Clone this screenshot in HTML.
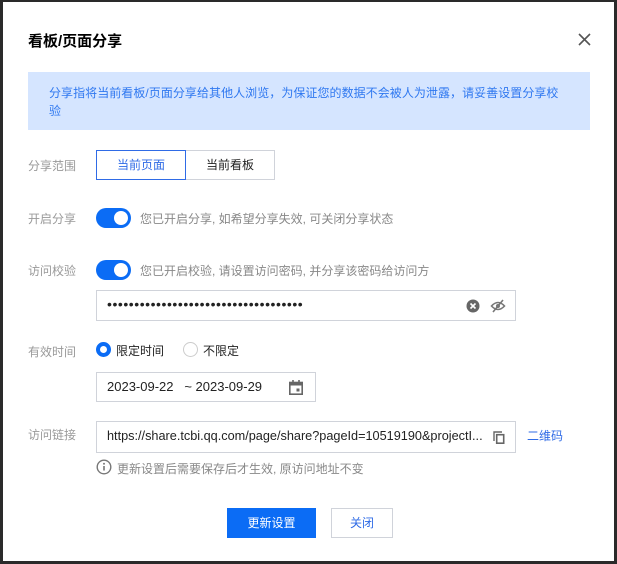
<!DOCTYPE html>
<html><head><meta charset="utf-8"><style>
*{box-sizing:border-box;margin:0;padding:0}
body{width:617px;height:564px;background:#2a2a2a;position:relative;overflow:hidden;font-family:"Liberation Sans","Noto Sans CJK SC",sans-serif;font-size:12px;color:#333}
#d{position:absolute;left:3px;top:2px;width:611px;height:559px;background:#fff}
.a{position:absolute}
.lbl{position:absolute;left:25px;color:#999;font-size:12px}
.inp{position:absolute;border:1px solid #d0d3da;background:#fff}
.tog{position:absolute;width:35px;height:20px;border-radius:10px;background:#0b6cf5}
.tog::after{content:"";position:absolute;right:3px;top:3px;width:14px;height:14px;border-radius:50%;background:#fff}
.hint{position:absolute;color:#888;font-size:12px}
</style></head><body><div id="d">
<div class="a" style="left:25px;top:28px;font-size:15px;font-weight:bold;color:#000">看板/页面分享</div>
<svg class="a" style="left:575px;top:31px" width="13" height="13" viewBox="0 0 13 13"><path d="M1 1L12 12M12 1L1 12" stroke="#555" stroke-width="1.6"/></svg>
<div class="a" style="left:25px;top:70px;width:562px;height:58px;background:#d5e5ff;color:#2f78f0;padding:12px 10px 0 21px;line-height:18px;letter-spacing:0.05px;white-space:nowrap">分享指将当前看板/页面分享给其他人浏览，为保证您的数据不会被人为泄露，请妥善设置分享校<br>验</div>
<div class="lbl" style="top:155px">分享范围</div>
<div class="a" style="left:93px;top:148px;width:90px;height:30px;border:1px solid #2f6be6;color:#2f6be6;text-align:center;line-height:28px;z-index:1">当前页面</div>
<div class="a" style="left:182px;top:148px;width:90px;height:30px;border:1px solid #d0d3da;text-align:center;line-height:28px;color:#222">当前看板</div>
<div class="lbl" style="top:208px">开启分享</div>
<div class="tog" style="left:93px;top:206px"></div>
<div class="hint" style="left:137px;top:208px">您已开启分享, 如希望分享失效, 可关闭分享状态</div>
<div class="lbl" style="top:260px">访问校验</div>
<div class="tog" style="left:93px;top:258px"></div>
<div class="hint" style="left:137px;top:260px">您已开启校验, 请设置访问密码, 并分享该密码给访问方</div>
<div class="inp" style="left:93px;top:288px;width:420px;height:31px">
<div class="a" style="left:10px;top:5px;font-size:14px;letter-spacing:0.55px;color:#222">••••••••••••••••••••••••••••••••••••</div>
<svg class="a" style="left:369px;top:8px" width="14" height="14" viewBox="0 0 14 14"><circle cx="7" cy="7" r="6.5" fill="#666"/><path d="M4.5 4.5L9.5 9.5M9.5 4.5L4.5 9.5" stroke="#fff" stroke-width="1.6"/></svg>
<svg class="a" style="left:393px;top:7px" width="16" height="16" viewBox="0 0 16 16"><path d="M1.5 8Q8 1 14.5 8Q8 15 1.5 8Z" fill="none" stroke="#777" stroke-width="1.6"/><circle cx="8" cy="8" r="2" fill="#777"/><path d="M3 14L13 2" stroke="#777" stroke-width="1.6"/></svg>
</div>
<div class="lbl" style="top:341px">有效时间</div>
<div class="a" style="left:93px;top:340px;width:15px;height:15px;border-radius:50%;border:4px solid #0b6cf5"></div>
<div class="a" style="left:113px;top:340px;color:#222">限定时间</div>
<div class="a" style="left:180px;top:340px;width:15px;height:15px;border-radius:50%;border:1px solid #ccc"></div>
<div class="a" style="left:200px;top:340px;color:#222">不限定</div>
<div class="inp" style="left:93px;top:370px;width:220px;height:30px">
<div class="a" style="left:10px;top:6px;color:#222;font-size:13px;white-space:pre">2023-09-22   ~ 2023-09-29</div>
<svg class="a" style="left:192px;top:7px" width="14" height="15" viewBox="0 0 14 15"><rect x="0.8" y="2.5" width="12.4" height="11.7" fill="none" stroke="#666" stroke-width="1.6"/><rect x="0.8" y="2.5" width="12.4" height="3" fill="#666"/><path d="M4 0v3M10 0v3" stroke="#666" stroke-width="1.6"/><rect x="7.5" y="8.5" width="3" height="3" fill="#666"/></svg>
</div>
<div class="lbl" style="top:424px">访问链接</div>
<div class="inp" style="left:93px;top:419px;width:420px;height:32px">
<div class="a" style="left:10px;top:7px;color:#222;font-size:12.7px">https://share.tcbi.qq.com/page/share?pageId=10519190&amp;projectI...</div>
<svg class="a" style="left:396px;top:9px" width="12" height="13" viewBox="0 0 12 13"><path d="M1 10V1H9" fill="none" stroke="#666" stroke-width="1.4"/><rect x="3.7" y="3.7" width="7" height="8.5" fill="none" stroke="#666" stroke-width="1.6"/></svg>
</div>
<div class="a" style="left:524px;top:425px;color:#2f6be6">二维码</div>
<svg class="a" style="left:93px;top:457px" width="16" height="16" viewBox="0 0 16 16"><circle cx="8" cy="8" r="6.8" fill="none" stroke="#777" stroke-width="1.4"/><path d="M8 7v4.5" stroke="#777" stroke-width="1.6"/><circle cx="8" cy="4.7" r="1" fill="#777"/></svg>
<div class="hint" style="left:114px;top:458px">更新设置后需要保存后才生效, 原访问地址不变</div>
<div class="a" style="left:224px;top:506px;width:89px;height:30px;background:#0b6cf5;color:#fff;text-align:center;line-height:30px">更新设置</div>
<div class="a" style="left:328px;top:506px;width:62px;height:30px;border:1px solid #d0d3da;color:#2f6be6;text-align:center;line-height:28px">关闭</div>
</div></body></html>
